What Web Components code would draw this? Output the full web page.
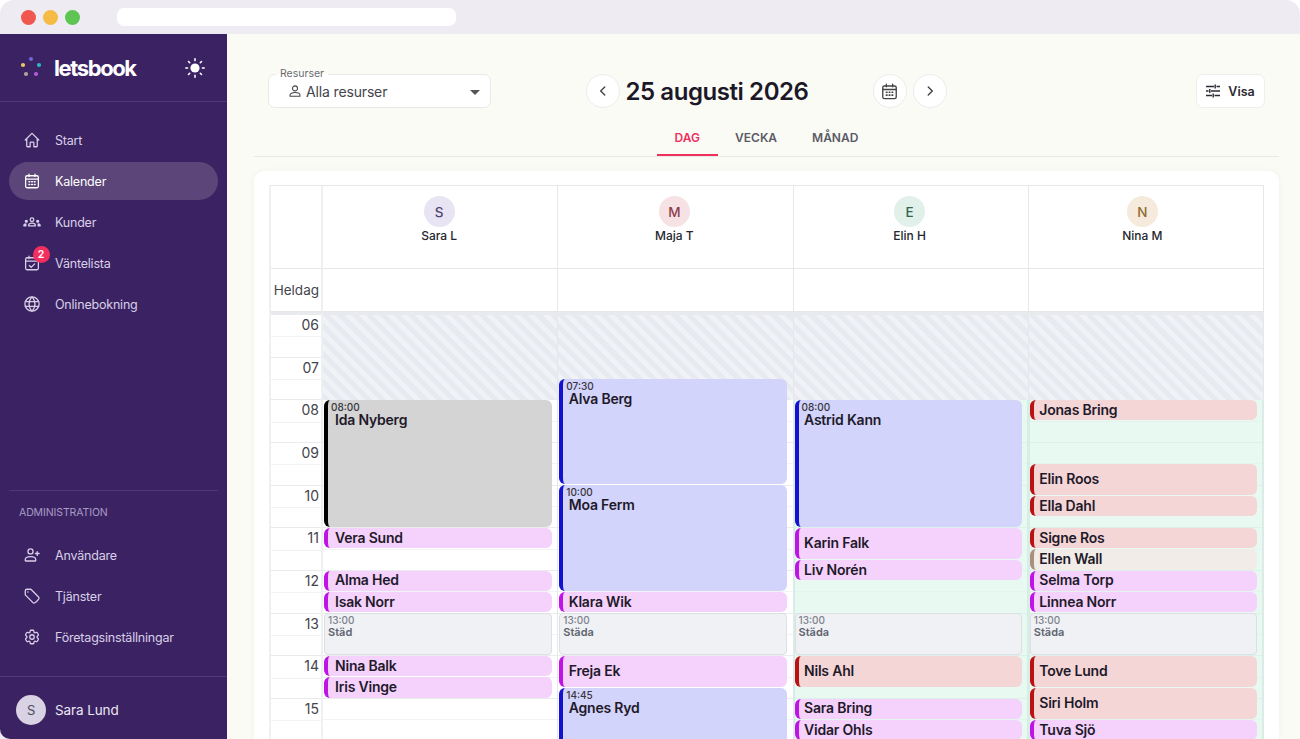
<!DOCTYPE html>
<html lang="sv">
<head>
<meta charset="utf-8">
<title>letsbook</title>
<style>
  html, body { margin: 0; height: 739px; overflow: hidden; background: #fff; }
  body { font-family: Inter, "Liberation Sans", sans-serif; }
</style>
</head>
<body>
<app-window>
  <app-sidebar slot="side">
    <nav-item label="Start" icon="home"></nav-item>
    <nav-item label="Kalender" icon="calendar" active></nav-item>
    <nav-item label="Kunder" icon="groups"></nav-item>
    <nav-item label="Väntelista" icon="check" badge="2"></nav-item>
    <nav-item label="Onlinebokning" icon="globe"></nav-item>
    <nav-item slot="admin" label="Användare" icon="userplus"></nav-item>
    <nav-item slot="admin" label="Tjänster" icon="tag"></nav-item>
    <nav-item slot="admin" label="Företagsinställningar" icon="cog"></nav-item>
  </app-sidebar>
  <cal-toolbar></cal-toolbar>
  <cal-tabs></cal-tabs>
  <cal-grid>
    <cal-head slot="head" letter="S" name="Sara L" bg="#e8e4f4" fg="#4e4570"></cal-head>
    <cal-head slot="head" letter="M" name="Maja T" bg="#f6e2e4" fg="#8f3e50"></cal-head>
    <cal-head slot="head" letter="E" name="Elin H" bg="#e2f0ea" fg="#2f6650"></cal-head>
    <cal-head slot="head" letter="N" name="Nina M" bg="#f6eadc" fg="#8f6c30" style="padding-right:7px"></cal-head>

    <cal-column style="--pad:7px;--right:5px">
      <cal-event kind="grey" start="8:00" end="11:00" time="08:00">Ida Nyberg</cal-event>
      <cal-event kind="pink" start="11:00" end="11:30">Vera Sund</cal-event>
      <cal-event kind="pink" start="12:00" end="12:30">Alma Hed</cal-event>
      <cal-event kind="pink" start="12:30" end="13:00">Isak Norr</cal-event>
      <cal-event kind="block" start="13:00" end="14:00" time="13:00">Städ</cal-event>
      <cal-event kind="pink" start="14:00" end="14:30">Nina Balk</cal-event>
      <cal-event kind="pink" start="14:30" end="15:00">Iris Vinge</cal-event>
    </cal-column>
    <cal-column>
      <cal-event kind="blue" start="7:30" end="10:00" time="07:30">Alva Berg</cal-event>
      <cal-event kind="blue" start="10:00" end="12:30" time="10:00">Moa Ferm</cal-event>
      <cal-event kind="pink" start="12:30" end="13:00">Klara Wik</cal-event>
      <cal-event kind="block" start="13:00" end="14:00" time="13:00">Städa</cal-event>
      <cal-event kind="pink" start="14:00" end="14:45">Freja Ek</cal-event>
      <cal-event kind="blue" start="14:45" end="17:00" time="14:45">Agnes Ryd</cal-event>
    </cal-column>
    <cal-column open>
      <cal-event kind="blue" start="8:00" end="11:00" time="08:00">Astrid Kann</cal-event>
      <cal-event kind="pink" start="11:00" end="11:45">Karin Falk</cal-event>
      <cal-event kind="pink" start="11:45" end="12:15">Liv Norén</cal-event>
      <cal-event kind="block" start="13:00" end="14:00" time="13:00">Städa</cal-event>
      <cal-event kind="red" start="14:00" end="14:45">Nils Ahl</cal-event>
      <cal-event kind="pink" start="15:00" end="15:30">Sara Bring</cal-event>
      <cal-event kind="pink" start="15:30" end="16:00">Vidar Ohls</cal-event>
    </cal-column>
    <cal-column open>
      <cal-event kind="red" start="8:00" end="8:30">Jonas Bring</cal-event>
      <cal-event kind="red" start="9:30" end="10:15">Elin Roos</cal-event>
      <cal-event kind="red" start="10:15" end="10:45">Ella Dahl</cal-event>
      <cal-event kind="red" start="11:00" end="11:30">Signe Ros</cal-event>
      <cal-event kind="beige" start="11:30" end="12:00">Ellen Wall</cal-event>
      <cal-event kind="pink" start="12:00" end="12:30">Selma Torp</cal-event>
      <cal-event kind="pink" start="12:30" end="13:00">Linnea Norr</cal-event>
      <cal-event kind="block" start="13:00" end="14:00" time="13:00">Städa</cal-event>
      <cal-event kind="red" start="14:00" end="14:45">Tove Lund</cal-event>
      <cal-event kind="red" start="14:45" end="15:30">Siri Holm</cal-event>
      <cal-event kind="pink" start="15:30" end="16:00">Tuva Sjö</cal-event>
    </cal-column>
  </cal-grid>
</app-window>

<script>
const HOUR = 42.67;
const FIRST_HOUR = 6;

const ICONS = {
  home: '<path d="M3 12l8.2-8.2c.45-.45 1.15-.45 1.6 0L21 12M5 9.8v10.1c0 .6.5 1.1 1.1 1.1h3.4v-5c0-.6.5-1.1 1.1-1.1h2.8c.6 0 1.1.5 1.1 1.1v5h3.4c.6 0 1.1-.5 1.1-1.1V9.8"/>',
  calendar: '<rect x="3.5" y="5" width="17" height="16" rx="2"/><path d="M3.5 9.5h17M8 2.8V6M16 2.8V6"/><path d="M8 13h.9M11.6 13h.9M15.2 13h.9M8 16.6h.9M11.6 16.6h.9M15.2 16.6h.9" stroke-width="2"/>',
  groups: '<circle cx="12" cy="9" r="2.4"/><path d="M7.6 17.2v-1c0-1.5 2-2.6 4.4-2.6s4.4 1.1 4.4 2.6v1z"/><circle cx="4.4" cy="11" r="1.3" fill="currentColor"/><circle cx="19.6" cy="11" r="1.3" fill="currentColor"/><path d="M1.2 17.2v-.8c0-1 1-1.8 2.6-1.8v2.6zM22.8 17.2v-.8c0-1-1-1.8-2.6-1.8v2.6z" fill="currentColor"/>',
  check: '<rect x="3.5" y="5" width="17" height="16" rx="2"/><path d="M3.5 9.5h17M8 2.8V6M16 2.8V6M8.5 15.4l2.4 2.4 4.6-4.6"/>',
  globe: '<circle cx="12" cy="12" r="9.5"/><path d="M3.2 8.8h17.6M3.2 15.2h17.6M12 2.5c2.6 2.6 3.9 5.8 3.9 9.5s-1.3 6.9-3.9 9.5c-2.6-2.6-3.9-5.8-3.9-9.5s1.3-6.9 3.9-9.5z"/>',
  userplus: '<circle cx="10" cy="7.2" r="3.4"/><path d="M3 19.4v-1.1c0-2.4 3.1-4 7-4s7 1.6 7 4v1.1c0 .4-.3.6-.6.6H3.6c-.3 0-.6-.2-.6-.6zM19 7.5v5M16.5 10h5"/>',
  tag: '<path d="M9.6 3H5.3A2.3 2.3 0 003 5.3v4.3c0 .6.2 1.2.7 1.6l9.5 9.6c.7.7 1.8.9 2.6.3a18 18 0 005.3-5.2c.5-.8.4-1.9-.4-2.6l-9.5-9.6A2.3 2.3 0 009.6 3z"/><path d="M6.5 6.5h.1" stroke-width="2"/>',
  cog: '<path d="M9.594 3.94c.09-.542.56-.94 1.11-.94h2.593c.55 0 1.02.398 1.11.94l.213 1.281c.063.374.313.686.645.87.074.04.147.083.22.127.324.196.72.257 1.075.124l1.217-.456a1.125 1.125 0 011.37.49l1.296 2.247a1.125 1.125 0 01-.26 1.431l-1.003.827c-.293.24-.438.613-.431.992a6.759 6.759 0 010 .255c-.007.378.138.75.43.99l1.005.828c.424.35.534.954.26 1.43l-1.298 2.247a1.125 1.125 0 01-1.369.491l-1.217-.456c-.355-.133-.75-.072-1.076.124a6.57 6.57 0 01-.22.128c-.331.183-.581.495-.644.869l-.213 1.28c-.09.543-.56.941-1.11.941h-2.594c-.55 0-1.02-.398-1.11-.94l-.213-1.281c-.062-.374-.312-.686-.644-.87a6.52 6.52 0 01-.22-.127c-.325-.196-.72-.257-1.076-.124l-1.217.456a1.125 1.125 0 01-1.369-.49l-1.297-2.247a1.125 1.125 0 01.26-1.431l1.004-.827c.292-.24.437-.613.43-.992a6.932 6.932 0 010-.255c.007-.378-.138-.75-.43-.99l-1.004-.828a1.125 1.125 0 01-.26-1.43l1.297-2.247a1.125 1.125 0 011.37-.491l1.216.456c.356.133.751.072 1.076-.124.072-.044.146-.087.22-.128.332-.183.582-.495.644-.869l.214-1.281z"/><circle cx="12" cy="12" r="3"/>'
};

function icon(name, size) {
  return `<svg width="${size}" height="${size}" viewBox="0 0 24 24" fill="none" stroke="currentColor" stroke-width="1.7" stroke-linecap="round" stroke-linejoin="round">${ICONS[name]}</svg>`;
}

class AppWindow extends HTMLElement {
  constructor() {
    super();
    this.attachShadow({ mode: 'open' });
    this.shadowRoot.innerHTML = `
      <style>
        :host { display: flex; flex-direction: column; height: 739px; overflow: hidden; border-radius: 14px 14px 0 0; background: #eeebf3; }
        .chrome { flex: none; height: 34px; display: flex; align-items: center; padding-left: 21px; gap: 7px; }
        .dot { width: 15px; height: 15px; border-radius: 50%; }
        .url { width: 339px; height: 18px; background: #fff; border-radius: 7px; margin-left: 30px; }
        .body { flex: 1; display: flex; min-height: 0; }
        .main { flex: 1; min-width: 0; background: #fbfbf5; padding-top: 40px; display: flex; flex-direction: column; }
      </style>
      <div class="chrome">
        <span class="dot" style="background:#f0584f"></span>
        <span class="dot" style="background:#f6bb45"></span>
        <span class="dot" style="background:#5ec552"></span>
        <span class="url"></span>
      </div>
      <div class="body">
        <slot name="side"></slot>
        <div class="main"><slot></slot></div>
      </div>`;
  }
}

class AppSidebar extends HTMLElement {
  constructor() {
    super();
    this.attachShadow({ mode: 'open' });
    this.shadowRoot.innerHTML = `
      <style>
        :host { flex: none; width: 227px; display: flex; flex-direction: column; background: #3b2363; color: #d9d0e8; border-bottom-left-radius: 10px; }
        .brand { height: 68px; box-sizing: border-box; border-bottom: 1px solid #4f3a76; display: flex; align-items: center; padding: 0 22px 0 20px; }
        .word { font-size: 22px; font-weight: 700; letter-spacing: -1.4px; color: #fff; margin-left: 10px; flex: 1; }
        nav { display: flex; flex-direction: column; gap: 3px; padding: 19px 9px 0; }
        .admin { margin: auto 9px 0; border-top: 1px solid #4f3a76; padding-bottom: 20px; }
        .admin h2 { margin: 15px 0 16px 10px; font-size: 10.5px; letter-spacing: -.1px; line-height: 14px; font-weight: 400; color: #a99bc4; }
        .admin div { display: flex; flex-direction: column; gap: 3px; }
        .user { height: 63px; box-sizing: border-box; border-top: 1px solid #4f3a76; display: flex; align-items: center; padding: 3px 0 0 16px; gap: 9px; font-size: 13.5px; letter-spacing: -.1px; color: #ece7f4; }
        .avatar { width: 30px; height: 30px; border-radius: 50%; background: #d8d2e4; color: #4a4a55; display: flex; align-items: center; justify-content: center; font-size: 13px; }
      </style>
      <div class="brand">
        <svg width="24" height="24" viewBox="0 0 24 24">
          <circle cx="11" cy="3" r="2.1" fill="#6f66d8"/>
          <circle cx="19" cy="9" r="2.1" fill="#2fb5c8"/>
          <circle cx="16" cy="18" r="2.1" fill="#b45cd8"/>
          <circle cx="6" cy="18" r="2.1" fill="#b0a49a"/>
          <circle cx="3" cy="9" r="2.1" fill="#e8c860"/>
        </svg>
        <span class="word">letsbook</span>
        <svg width="20" height="20" viewBox="0 0 20 20" stroke="#fff" stroke-width="1.6" stroke-linecap="round">
          <circle cx="10" cy="10" r="4.6" fill="#fff" stroke="none"/>
          <path d="M10 .8v1.8M10 17.4v1.8M.8 10h1.8M17.4 10h1.8M3.5 3.5l1.2 1.2M15.3 15.3l1.2 1.2M3.5 16.5l1.2-1.2M15.3 4.7l1.2-1.2"/>
        </svg>
      </div>
      <nav><slot></slot></nav>
      <section class="admin">
        <h2>ADMINISTRATION</h2>
        <div><slot name="admin"></slot></div>
      </section>
      <div class="user"><span class="avatar">S</span>Sara Lund</div>`;
  }
}

class NavItem extends HTMLElement {
  constructor() {
    super();
    this.attachShadow({ mode: 'open' });
  }
  connectedCallback() {
    const badge = this.getAttribute('badge');
    this.shadowRoot.innerHTML = `
      <style>
        :host { display: flex; align-items: center; height: 38px; border-radius: 19px; padding-left: 14px; font-size: 12.5px; letter-spacing: -.2px; color: #d9d0e8; position: relative; }
        :host([active]) { background: #5c4679; color: #fff; }
        svg { flex: none; width: 18px; height: 18px; margin-right: 14px; }
        .badge { position: absolute; left: 23.5px; top: 1.5px; width: 17px; height: 17px; border-radius: 50%; background: #f22f5f; color: #fff; font-size: 10.5px; font-weight: 600; display: flex; align-items: center; justify-content: center; }
      </style>
      ${icon(this.getAttribute('icon'), 18)}
      <span>${this.getAttribute('label')}</span>
      ${badge ? `<span class="badge">${badge}</span>` : ''}`;
  }
}

class CalToolbar extends HTMLElement {
  constructor() {
    super();
    this.attachShadow({ mode: 'open' });
    this.shadowRoot.innerHTML = `
      <style>
        :host { display: grid; grid-template-columns: 1fr auto 1fr; align-items: center; height: 34px; padding: 0 35px 0 41px; color: #444; }
        .select { position: relative; width: 223px; height: 34px; box-sizing: border-box; background: #fff; border: 1px solid #eaeaea; border-radius: 7px; display: flex; align-items: center; padding-left: 19px; gap: 4px; font-size: 14px; letter-spacing: -.15px; color: #44444c; }
        .select label { position: absolute; left: 7px; top: -7px; padding: 0 4px; font-size: 10.5px; letter-spacing: 0; line-height: 12px; color: #6b6b72; background: linear-gradient(#fbfbf5 50%, #fff 50%); }
        .arrow { position: absolute; right: 10px; top: 15px; border: 5.5px solid transparent; border-top: 5px solid #555; border-bottom: 0; }
        .center { display: flex; align-items: center; }
        .round { width: 34px; height: 34px; box-sizing: border-box; border-radius: 50%; background: #fff; border: 1px solid #ececec; display: flex; align-items: center; justify-content: center; color: #444; }
        h1 { margin: 0 64px 0 5px; font-size: 24px; font-weight: 600; letter-spacing: -.42px; color: #1c1828; white-space: nowrap; }
        .visa { justify-self: end; width: 69px; height: 34px; box-sizing: border-box; background: #fff; border: 1px solid #eeeeee; border-radius: 7px; display: flex; align-items: center; justify-content: center; gap: 8px; font-size: 12.5px; font-weight: 600; color: #2b2b33; }
      </style>
      <div class="select">
        <label>Resurser</label>
        <svg width="14" height="14" viewBox="0 0 24 24" fill="none" stroke="currentColor" stroke-width="1.8"><circle cx="12" cy="7.5" r="4.3"/><path d="M3.5 21v-2c0-2.6 3.8-4.3 8.5-4.3s8.5 1.7 8.5 4.3v2z"/></svg>
        Alla resurser
        <span class="arrow"></span>
      </div>
      <div class="center">
        <span class="round"><svg width="14" height="14" viewBox="0 0 24 24" fill="none" stroke="currentColor" stroke-width="2.4" stroke-linecap="round" stroke-linejoin="round"><path d="M15 5l-7 7 7 7"/></svg></span>
        <h1>25 augusti 2026</h1>
        <span class="round">${icon('calendar', 19)}</span>
        <span class="round" style="margin-left:6px"><svg width="14" height="14" viewBox="0 0 24 24" fill="none" stroke="currentColor" stroke-width="2.4" stroke-linecap="round" stroke-linejoin="round"><path d="M9 5l7 7-7 7"/></svg></span>
      </div>
      <div class="visa">
        <svg width="14" height="14" viewBox="0 0 14 14" stroke="currentColor" stroke-width="1.4"><path d="M0 2.5h8M10.5 2.5H14M9.2.5v4M0 7h2.5M5 7h9M3.8 5v4M0 11.5h6M8.5 11.5H14M7.2 9.5v4"/></svg>
        Visa
      </div>`;
  }
}

class CalTabs extends HTMLElement {
  constructor() {
    super();
    this.attachShadow({ mode: 'open' });
    this.shadowRoot.innerHTML = `
      <style>
        :host { display: flex; justify-content: center; margin: 14px 21px 0 27px; height: 35px; box-sizing: border-box; border-bottom: 1px solid #e9e9e6; font-size: 12px; font-weight: 600; color: #5b5a66; }
        span { display: flex; align-items: center; padding: 0 17.5px 3px; height: 34px; box-sizing: border-box; }
        .on { color: #ee2f60; border-bottom: 2.5px solid #ee2f60; padding-bottom: .5px; }
      </style>
      <span class="on">DAG</span><span>VECKA</span><span>MÅNAD</span>`;
  }
}

class CalGrid extends HTMLElement {
  constructor() {
    super();
    this.attachShadow({ mode: 'open' });
    const hours = [];
    for (let h = FIRST_HOUR; h < 16; h++) hours.push(`<div class="hour">${String(h).padStart(2, '0')}</div>`);
    this.shadowRoot.innerHTML = `
      <style>
        :host { display: block; flex: 1; min-height: 0; margin: 14px 21px 0 27px; box-sizing: border-box; background: #fff; border-radius: 10px 10px 0 0; padding: 14px 15px 0; box-shadow: 0 0 6px rgba(60,60,40,.05); overflow: hidden; }
        .table { display: grid; grid-template-columns: 52px repeat(4, 1fr); grid-template-rows: 83px 43px auto; border-left: 2px solid #eef0f2; border-top: 1px solid #e5e7eb; }
        .cell { border-bottom: 1px solid #e5e7eb; border-right: 1px solid #e5e7eb; }
        .all { display: flex; align-items: center; justify-content: flex-end; padding-right: 2px; font-size: 13.5px; color: #44444c; border-right-width: 2px; border-right-color: #eef0f2; }
        .head { display: contents; }
        .times { border-top: 3px solid #e8eaed; border-right: 2px solid #eef0f2; }
        .hour { height: ${HOUR}px; box-sizing: border-box; text-align: right; padding: 0 2px 0 0; font-size: 14px; line-height: 20px; color: #44444c;
          background: linear-gradient(#f2f3f4, #f2f3f4) 0 ${HOUR / 2}px / 100% 1px no-repeat, linear-gradient(#eaebed, #eaebed) 0 100% / 100% 1px no-repeat; }
        .cols { grid-column: 2 / 6; display: grid; grid-template-columns: repeat(4, 1fr); border-top: 3px solid #e8eaed; }
      </style>
      <div class="table">
        <div class="cell" style="border-right:2px solid #eef0f2"></div>
        <div class="head"><slot name="head"></slot></div>
        <div class="cell all">Heldag</div>
        <div class="cell"></div><div class="cell"></div><div class="cell"></div><div class="cell"></div>
        <div class="times">${hours.join('')}</div>
        <div class="cols"><slot></slot></div>
      </div>`;
  }
}

class CalHead extends HTMLElement {
  constructor() {
    super();
    this.attachShadow({ mode: 'open' });
  }
  connectedCallback() {
    this.shadowRoot.innerHTML = `
      <style>
        :host { display: flex; flex-direction: column; align-items: center; box-sizing: border-box; padding: 10px 2px 0 0; gap: 2px; line-height: 14px; border-bottom: 1px solid #e5e7eb; border-right: 1px solid #e5e7eb; font-size: 12px; font-weight: 500; color: #26262e; }
        .av { width: 31px; height: 31px; border-radius: 50%; display: flex; align-items: center; justify-content: center; font-size: 13.5px; font-weight: 500; background: ${this.getAttribute('bg')}; color: ${this.getAttribute('fg')}; }
      </style>
      <span class="av">${this.getAttribute('letter')}</span>
      <span>${this.getAttribute('name')}</span>`;
  }
}

class CalColumn extends HTMLElement {
  constructor() {
    super();
    this.attachShadow({ mode: 'open' });
    this.shadowRoot.innerHTML = `
      <style>
        :host { display: block; position: relative; height: ${HOUR * 12}px; border-right: 1px solid #e5e7eb;
          background: repeating-linear-gradient(to bottom, transparent 0 ${HOUR / 2 - 1}px, #f2f3f4 ${HOUR / 2 - 1}px ${HOUR / 2}px, transparent ${HOUR / 2}px ${HOUR - 1}px, #eaebed ${HOUR - 1}px ${HOUR}px); }
        :host([open]) { box-shadow: inset -1px 0 0 #cfe9df, inset 1px 0 0 #cfe9df; }
        .closed { position: absolute; left: 0; right: 0; top: 0; height: ${HOUR * 2}px; background: repeating-linear-gradient(45deg, #e7eaf0 0 5px, #f0f2f6 5px 10px); }
        .free { display: none; position: absolute; left: 0; right: 0; top: ${HOUR * 2}px; bottom: 0; background: rgba(214, 244, 232, .55); }
        :host([open]) .free { display: block; }
      </style>
      <div class="free"></div>
      <div class="closed"></div>
      <slot></slot>`;
  }
}

const KINDS = {
  grey: ['#d4d4d4', '#000'],
  pink: ['#f5d2fc', '#c013e6'],
  blue: ['#d2d4fb', '#1212cf'],
  red: ['#f5d6d6', '#b81212'],
  beige: ['#f1ece7', '#a98f80']
};

function hoursOf(text) {
  const [h, m] = text.split(':').map(Number);
  return h + m / 60;
}

class CalEvent extends HTMLElement {
  constructor() {
    super();
    this.attachShadow({ mode: 'open' });
  }
  connectedCallback() {
    const start = hoursOf(this.getAttribute('start'));
    const end = hoursOf(this.getAttribute('end'));
    const kind = this.getAttribute('kind');
    const time = this.getAttribute('time');
    const block = kind === 'block';
    const [bg, bar] = KINDS[kind] || [];
    this.shadowRoot.innerHTML = `
      <style>
        :host { position: absolute; left: 1px; right: var(--right, 6px); top: ${(start - FIRST_HOUR) * HOUR - .5}px; height: ${(end - start) * HOUR - 1}px; box-sizing: border-box; overflow: hidden; border-radius: 6px; color: #1f1a2a; font-size: 14px; font-weight: 600; letter-spacing: -.2px; display: flex; flex-direction: column; ${time ? '' : 'justify-content: center; padding-bottom: .5px;'} ${block ? 'background: #eff1f4; border: 1px solid #dcdfe3; padding: 0 3px; color: #5f6470; font-size: 11px; letter-spacing: 0; border-radius: 4px;' : `background: ${bg}; border-left: 4px solid ${bar}; padding-left: var(--pad, 5.5px);`} }
        .time { font-size: 10px; letter-spacing: 0; line-height: 12px; font-weight: 500; color: ${block ? '#7d828c' : '#3a3640'}; ${block ? '' : 'margin-left: calc(3px - var(--pad, 5.5px)); margin-top: 1px;'} }
        .name { line-height: ${block ? 12 : 14}px; }
      </style>
      ${time ? `<span class="time">${time}</span>` : ''}
      <span class="name"><slot></slot></span>`;
  }
}

customElements.define('app-window', AppWindow);
customElements.define('app-sidebar', AppSidebar);
customElements.define('nav-item', NavItem);
customElements.define('cal-toolbar', CalToolbar);
customElements.define('cal-tabs', CalTabs);
customElements.define('cal-grid', CalGrid);
customElements.define('cal-head', CalHead);
customElements.define('cal-column', CalColumn);
customElements.define('cal-event', CalEvent);
</script>
</body>
</html>
